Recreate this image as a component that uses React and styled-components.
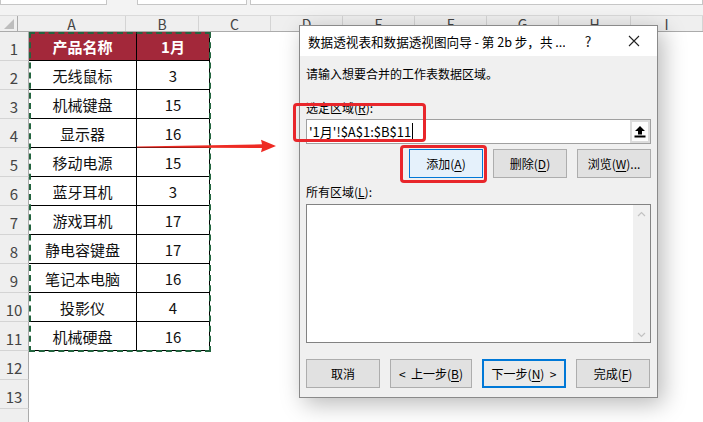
import React from "react";
import styled, { createGlobalStyle } from "styled-components";

const GlobalStyle = createGlobalStyle`
  html, body { margin: 0; padding: 0; background: #fff; overflow: hidden; }
  body { font-family: "Noto Sans CJK SC", "Noto Sans", sans-serif; }
  * { box-sizing: border-box; }
`;

const Page = styled.div`
  position: relative;
  width: 703px;
  height: 422px;
  overflow: hidden;
  background: #fff;
`;

const TopBar = styled.div`
  display: flex;
  height: 15px;
  background: #f3f3f3;
`;

const TopBox = styled.div`
  width: ${(p) => (p.$w ? `${p.$w}px` : "auto")};
  flex: ${(p) => (p.$w ? "none" : "1")};
  margin-left: ${(p) => p.$ml || 0}px;
  height: 5px;
  background: #fff;
  border: 1px solid #c6c6c6;
  border-top: none;
`;

const HeaderRow = styled.div`
  display: flex;
  height: 17px;
  background: #efefef;
  border-top: 1px solid #dadada;
  border-bottom: 1px solid #ababab;
`;

const Corner = styled.div`
  position: relative;
  width: 29px;
  border-right: 1px solid #ababab;
  &::after {
    content: "";
    position: absolute;
    right: 3px;
    bottom: 2px;
    border-style: solid;
    border-width: 0 0 10px 10px;
    border-color: transparent transparent #bdbdbd transparent;
  }
`;

const ColHead = styled.div`
  width: ${(p) => p.$w}px;
  flex: none;
  border-right: 1px solid #d4d4d4;
  display: flex;
  align-items: center;
  justify-content: center;
  font-size: 14px;
  line-height: 16px;
  color: #444;
`;

const Row = styled.div`
  display: flex;
  height: 29px;
`;

const RowNum = styled.div`
  width: 29px;
  flex: none;
  background: #efefef;
  border-right: 1px solid #ababab;
  border-bottom: 1px solid #d4d4d4;
  display: flex;
  align-items: center;
  justify-content: center;
  padding-top: 4px;
  font-size: 15px;
  color: #444;
`;

const Cell = styled.div`
  width: ${(p) => p.$w}px;
  flex: none;
  display: flex;
  align-items: center;
  justify-content: center;
  font-size: 15px;
  color: #111;
  background: ${(p) => (p.$head ? "#a3283a" : "#fff")};
  ${(p) => p.$head && "color: #fff; font-weight: 700;"}
  ${(p) => p.$data && "border-right: 1px solid #000; border-bottom: 1px solid #000;"}
`;

const Ants = styled.div`
  position: absolute;
  left: 29px;
  top: 32px;
  width: 182px;
  height: 320px;
  border: 2px dashed #23653f;
  pointer-events: none;
`;

const Arrow = styled.svg`
  position: absolute;
  left: 0;
  top: 0;
  pointer-events: none;
`;

const Dialog = styled.div`
  position: absolute;
  left: 299px;
  top: 25px;
  width: 359px;
  height: 373px;
  border: 1px solid #8a8a8a;
  background: #f0f0f0;
  box-shadow: 5px 6px 22px rgba(0, 0, 0, 0.28);
  display: flex;
  flex-direction: column;
`;

const TitleBar = styled.div`
  height: 30px;
  background: #fff;
  display: flex;
  align-items: center;
  padding-left: 8px;
  font-size: 12.6px;
  color: #000;
`;

const TitleText = styled.div`
  flex: 1;
  min-width: 0;
  overflow: hidden;
  white-space: nowrap;
`;

const TitleButton = styled.div`
  width: 46px;
  flex: none;
  height: 30px;
  display: flex;
  align-items: center;
  justify-content: center;
  font-size: 14px;
  color: #222;
`;

const Body = styled.div`
  display: flex;
  flex-direction: column;
  padding: 0 6px 0 6px;
  font-size: 12px;
  color: #000;
`;

const Text = styled.div`
  line-height: 16px;
  margin-top: ${(p) => p.$mt}px;
  white-space: nowrap;
`;

const InputBox = styled.div`
  margin-top: 3px;
  height: 25px;
  display: flex;
  align-items: center;
  background: #fff;
  border: 1px solid #a0a0a0;
`;

const InputText = styled.div`
  flex: 1;
  display: flex;
  align-items: center;
  padding-left: 2px;
  font-size: 13px;
  color: #000;
`;

const Caret = styled.span`
  display: inline-block;
  width: 1px;
  height: 17px;
  background: #000;
  margin-left: 1px;
`;

const PickButton = styled.div`
  width: 20px;
  height: 23px;
  background: #dcdcdc;
  padding: 2px;
  display: flex;
`;

const PickInner = styled.div`
  flex: 1;
  background: #fdfdfd;
  display: flex;
  align-items: center;
  justify-content: center;
`;

const ButtonRow = styled.div`
  display: flex;
  justify-content: ${(p) => (p.$end ? "flex-end" : "flex-start")};
  gap: 10px;
  margin-top: ${(p) => p.$mt}px;
`;

const Button = styled.div`
  width: ${(p) => p.$w}px;
  height: 29px;
  display: flex;
  align-items: center;
  justify-content: center;
  font-size: 12px;
  color: #000;
  background: ${(p) => (p.$focus ? "#e5f1fb" : p.$default ? "#eaeaea" : "#e1e1e1")};
  border: ${(p) => (p.$default ? "2px solid #0078d7" : p.$focus ? "1px solid #0078d7" : "1px solid #adadad")};
  white-space: pre;
  u { text-decoration: underline; text-underline-offset: 2px; }
`;

const ListBox = styled.div`
  margin-top: 4px;
  height: 139px;
  background: #fff;
  border: 1px solid #828282;
  display: flex;
  justify-content: flex-end;
`;

const ScrollBar = styled.div`
  width: 17px;
  background: #f0f0f0;
  display: flex;
  flex-direction: column;
  justify-content: space-between;
  align-items: center;
  padding: 6px 0 4px;
`;

const Highlight = styled.div`
  position: absolute;
  left: ${(p) => p.$x}px;
  top: ${(p) => p.$y}px;
  width: ${(p) => p.$w}px;
  height: ${(p) => p.$h}px;
  border: 3px solid #e8262b;
  border-radius: 4px;
  pointer-events: none;
`;

const cols = [
  ["A", 108],
  ["B", 73],
  ["C", 72],
  ["D", 72],
  ["E", 72],
  ["F", 72],
  ["G", 72],
  ["H", 72],
  ["I", 72],
];

const data = [
  ["无线鼠标", "3"],
  ["机械键盘", "15"],
  ["显示器", "16"],
  ["移动电源", "15"],
  ["蓝牙耳机", "3"],
  ["游戏耳机", "17"],
  ["静电容键盘", "17"],
  ["笔记本电脑", "16"],
  ["投影仪", "4"],
  ["机械硬盘", "16"],
];

const Chevron = ({ up }) => (
  <svg width="9" height="6" viewBox="0 0 9 6">
    <polyline
      points={up ? "1,5 4.5,1.5 8,5" : "1,1 4.5,4.5 8,1"}
      fill="none"
      stroke="#c2c2c2"
      strokeWidth="1.2"
    />
  </svg>
);

export default function App() {
  return (
    <Page>
      <GlobalStyle />
      <TopBar>
        <TopBox $w={107} />
        <TopBox $w={110} $ml={30} />
        <TopBox $ml={3} />
      </TopBar>
      <HeaderRow>
        <Corner />
        {cols.map(([c, w]) => (
          <ColHead key={c} $w={w}>
            {c}
          </ColHead>
        ))}
      </HeaderRow>
      <Row>
        <RowNum>1</RowNum>
        <Cell $w={108} $head $data>
          产品名称
        </Cell>
        <Cell $w={73} $head $data>
          1月
        </Cell>
      </Row>
      {data.map(([name, v], i) => (
        <Row key={name}>
          <RowNum>{i + 2}</RowNum>
          <Cell $w={108} $data>
            {name}
          </Cell>
          <Cell $w={73} $data>
            {v}
          </Cell>
        </Row>
      ))}
      {[12, 13].map((n) => (
        <Row key={n}>
          <RowNum>{n}</RowNum>
        </Row>
      ))}
      <Row>
        <RowNum />
      </Row>
      <Ants />
      <Arrow width="703" height="422">
        <polygon
          points="137,146.6 262,144.3 261,139.8 276,146 261,152.2 262,148 137,147.4"
          fill="#ee2b24"
        />
      </Arrow>
      <Dialog>
        <TitleBar>
          <TitleText>数据透视表和数据透视图向导 - 第 2b 步，共 ...</TitleText>
          <TitleButton>?</TitleButton>
          <TitleButton>
            <svg width="12" height="12" viewBox="0 0 12 12">
              <path d="M1 1 L11 11 M11 1 L1 11" stroke="#222" strokeWidth="1.1" />
            </svg>
          </TitleButton>
        </TitleBar>
        <Body>
          <Text $mt={10}>请输入想要合并的工作表数据区域。</Text>
          <Text $mt={18}>
            选定区域(<u>R</u>):
          </Text>
          <InputBox>
            <InputText>
              '1月'!$A$1:$B$11
              <Caret />
            </InputText>
            <PickButton>
              <PickInner>
                <svg width="12" height="13" viewBox="0 0 12 13">
                  <polygon points="6,1 11,6 8,6 8,9.5 4,9.5 4,6 1,6" fill="#000" />
                  <rect x="0.5" y="10.5" width="11" height="2" fill="#000" />
                </svg>
              </PickInner>
            </PickButton>
          </InputBox>
          <ButtonRow $end $mt={5}>
            <Button $w={74} $focus>
              添加(<u>A</u>)
            </Button>
            <Button $w={74}>
              删除(<u>D</u>)
            </Button>
            <Button $w={74}>
              浏览(<u>W</u>)...
            </Button>
          </ButtonRow>
          <Text $mt={6}>
            所有区域(<u>L</u>):
          </Text>
          <ListBox>
            <ScrollBar>
              <Chevron up />
              <Chevron />
            </ScrollBar>
          </ListBox>
          <ButtonRow $mt={16}>
            <Button $w={74}>取消</Button>
            <Button $w={82}>
              {"<  "}上一步(<u>B</u>)
            </Button>
            <Button $w={84} $default>
              下一步(<u>N</u>){"  >"}
            </Button>
            <Button $w={74}>
              完成(<u>F</u>)
            </Button>
          </ButtonRow>
        </Body>
        <Highlight $x={-7} $y={77} $w={133} $h={39} />
        <Highlight $x={100} $y={119} $w={87} $h={38} />
      </Dialog>
    </Page>
  );
}
